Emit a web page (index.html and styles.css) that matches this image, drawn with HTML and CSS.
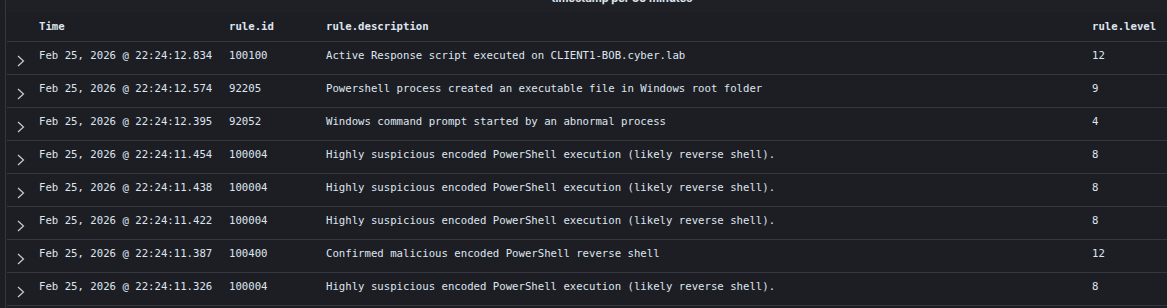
FILE: index.html
```html
<!DOCTYPE html>
<html>
<head>
<meta charset="utf-8">
<link rel="stylesheet" href="styles.css">
</head>
<body>
<div class="panel">
  <div class="title-strip"><div class="title">timestamp per 30 minutes</div></div>
  <div class="table">
    <div class="row head">
      <div class="cell toggle"></div>
      <div class="cell">Time</div>
      <div class="cell">rule.id</div>
      <div class="cell">rule.description</div>
      <div class="cell">rule.level</div>
    </div>
    <div class="row">
      <div class="cell toggle"><svg viewBox="0 0 8 12" width="8" height="12"><path d="M1 1 L6.5 6 L1 11" fill="none" stroke="#c8ccd4" stroke-width="1.2"/></svg></div>
      <div class="cell">Feb 25, 2026 @ 22:24:12.834</div>
      <div class="cell">100100</div>
      <div class="cell">Active Response script executed on CLIENT1-BOB.cyber.lab</div>
      <div class="cell">12</div>
    </div>
    <div class="row">
      <div class="cell toggle"><svg viewBox="0 0 8 12" width="8" height="12"><path d="M1 1 L6.5 6 L1 11" fill="none" stroke="#c8ccd4" stroke-width="1.2"/></svg></div>
      <div class="cell">Feb 25, 2026 @ 22:24:12.574</div>
      <div class="cell">92205</div>
      <div class="cell">Powershell process created an executable file in Windows root folder</div>
      <div class="cell">9</div>
    </div>
    <div class="row">
      <div class="cell toggle"><svg viewBox="0 0 8 12" width="8" height="12"><path d="M1 1 L6.5 6 L1 11" fill="none" stroke="#c8ccd4" stroke-width="1.2"/></svg></div>
      <div class="cell">Feb 25, 2026 @ 22:24:12.395</div>
      <div class="cell">92052</div>
      <div class="cell">Windows command prompt started by an abnormal process</div>
      <div class="cell">4</div>
    </div>
    <div class="row">
      <div class="cell toggle"><svg viewBox="0 0 8 12" width="8" height="12"><path d="M1 1 L6.5 6 L1 11" fill="none" stroke="#c8ccd4" stroke-width="1.2"/></svg></div>
      <div class="cell">Feb 25, 2026 @ 22:24:11.454</div>
      <div class="cell">100004</div>
      <div class="cell">Highly suspicious encoded PowerShell execution (likely reverse shell).</div>
      <div class="cell">8</div>
    </div>
    <div class="row">
      <div class="cell toggle"><svg viewBox="0 0 8 12" width="8" height="12"><path d="M1 1 L6.5 6 L1 11" fill="none" stroke="#c8ccd4" stroke-width="1.2"/></svg></div>
      <div class="cell">Feb 25, 2026 @ 22:24:11.438</div>
      <div class="cell">100004</div>
      <div class="cell">Highly suspicious encoded PowerShell execution (likely reverse shell).</div>
      <div class="cell">8</div>
    </div>
    <div class="row">
      <div class="cell toggle"><svg viewBox="0 0 8 12" width="8" height="12"><path d="M1 1 L6.5 6 L1 11" fill="none" stroke="#c8ccd4" stroke-width="1.2"/></svg></div>
      <div class="cell">Feb 25, 2026 @ 22:24:11.422</div>
      <div class="cell">100004</div>
      <div class="cell">Highly suspicious encoded PowerShell execution (likely reverse shell).</div>
      <div class="cell">8</div>
    </div>
    <div class="row">
      <div class="cell toggle"><svg viewBox="0 0 8 12" width="8" height="12"><path d="M1 1 L6.5 6 L1 11" fill="none" stroke="#c8ccd4" stroke-width="1.2"/></svg></div>
      <div class="cell">Feb 25, 2026 @ 22:24:11.387</div>
      <div class="cell">100400</div>
      <div class="cell">Confirmed malicious encoded PowerShell reverse shell</div>
      <div class="cell">12</div>
    </div>
    <div class="row">
      <div class="cell toggle"><svg viewBox="0 0 8 12" width="8" height="12"><path d="M1 1 L6.5 6 L1 11" fill="none" stroke="#c8ccd4" stroke-width="1.2"/></svg></div>
      <div class="cell">Feb 25, 2026 @ 22:24:11.326</div>
      <div class="cell">100004</div>
      <div class="cell">Highly suspicious encoded PowerShell execution (likely reverse shell).</div>
      <div class="cell">8</div>
    </div>
  </div>
</div>
</body>
</html>
```
FILE: styles.css
```css
html, body {
  margin: 0;
  padding: 0;
  background: #1d1e24;
  height: 100%;
  overflow: hidden;
}
.panel {
  margin-left: 5px;
  border-left: 1px solid #343741;
  height: 100%;
  padding-left: 1px;
}
.title-strip {
  height: 12px;
  overflow: hidden;
  position: relative;
  background: #1f2026;
}
.title {
  position: absolute;
  left: 0;
  right: 0;
  bottom: 7px;
  text-align: center;
  padding-left: 70px;
  font-family: Inter, "Noto Sans", sans-serif;
  font-weight: 700;
  font-size: 11px;
  line-height: 14px;
  color: #dfe5ef;
}
.table {
  font-family: "DejaVu Sans Mono", monospace;
  font-size: 10.67px;
  color: #dfe5ef;
  background: #1d1e24;
}
.row {
  display: grid;
  grid-template-columns: 32px 190px 97px 766px 1fr;
  height: 32px;
  border-bottom: 1px solid #343741;
  align-items: start;
}
.row.head {
  height: 29px;
  font-weight: 700;
}
.cell {
  padding-top: 7px;
  white-space: nowrap;
  line-height: 13px;
}
.head .cell {
  padding-top: 8px;
}
.toggle {
  padding-top: 13px;
  padding-left: 10px;
}
.toggle svg {
  display: block;
}
```
